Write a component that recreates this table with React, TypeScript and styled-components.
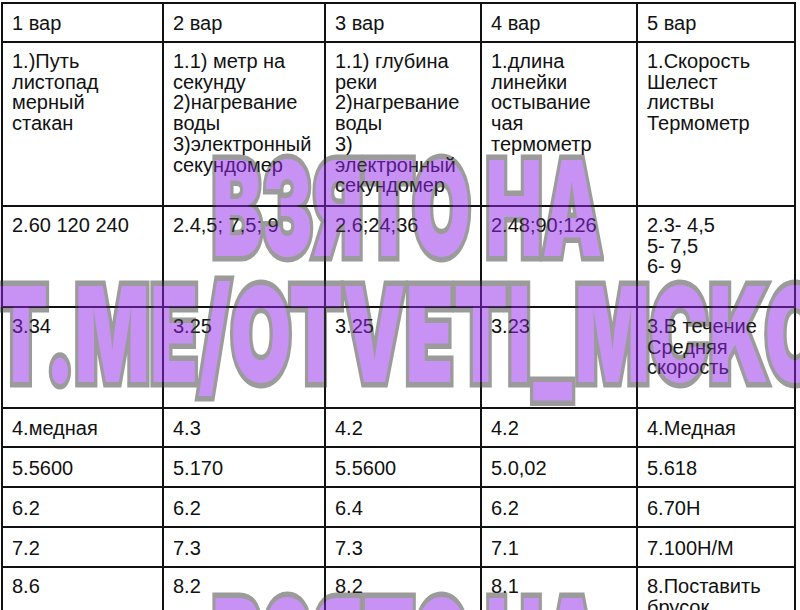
import { useLayoutEffect, useRef, useState } from "react";
import styled, { createGlobalStyle } from "styled-components";

type CellData = string | string[];

interface RowData {
  height: number;
  short?: boolean;
  cells: CellData[];
}

const columns = [161, 162, 156, 156, 158];

const rows: RowData[] = [
  { height: 39, short: true, cells: ["1 вар", "2 вар", "3 вар", "4 вар", "5 вар"] },
  {
    height: 164,
    cells: [
      ["1.)Путь", "листопад", "мерный", "стакан"],
      ["1.1) метр на", "секунду", "2)нагревание", "воды", "3)электронный", "секундомер"],
      ["1.1) глубина", "реки", "2)нагревание", "воды", "3)", "электронный", "секундомер"],
      ["1.длина", "линейки", "остывание", "чая", "термометр"],
      ["1.Скорость", "Шелест", "листвы", "Термометр"],
    ],
  },
  {
    height: 101,
    cells: ["2.60 120 240", "2.4,5; 7,5; 9", "2.6;24;36", "2.48;90;126", ["2.3- 4,5", "5- 7,5", "6- 9"]],
  },
  {
    height: 101,
    cells: ["3.34", "3.25", "3.25", "3.23", ["3.В течение", "Средняя", "скорость"]],
  },
  { height: 39, short: true, cells: ["4.медная", "4.3", "4.2", "4.2", "4.Медная"] },
  { height: 40, short: true, cells: ["5.5600", "5.170", "5.5600", "5.0,02", "5.618"] },
  { height: 40, short: true, cells: ["6.2", "6.2", "6.4", "6.2", "6.70Н"] },
  { height: 40, short: true, cells: ["7.2", "7.3", "7.3", "7.1", "7.100Н/М"] },
  { height: 100, cells: ["8.6", "8.2", "8.2", "8.1", ["8.Поставить", "брусок", "на"]] },
];

// watermark lines: left/top of the box, wanted width of the glyphs
const marks = [
  { text: "ВЗЯТО НА", left: 212, top: 142, width: 390 },
  { text: "T.ME/OTVETI_MCKO", left: -6, top: 268, width: 832 },
  { text: "ВЗЯТО НА", left: 212, top: 580, width: 390 },
];

const MarkText = ({ text, left, top, width }: { text: string; left: number; top: number; width: number }) => {
  const ref = useRef<HTMLDivElement>(null);
  const [scale, setScale] = useState(0.55);

  useLayoutEffect(() => {
    const el = ref.current;
    if (!el) return;
    const measure = () => {
      const w = el.scrollWidth;
      if (w) setScale(width / w);
    };
    measure();
    document.fonts?.ready.then(measure);
  }, [width]);

  return (
    <MarkLine ref={ref} $left={left} $top={top} style={{ transform: `scaleX(${scale})` }}>
      {text}
    </MarkLine>
  );
};

const App = () => {
  return (
    <Page>
      <GlobalStyle />
      <Table>
        {rows.map((row, r) =>
          row.cells.map((cell, c) => (
            <Cell key={`${r}-${c}`} $short={row.short} style={c === 0 ? { height: row.height } : undefined}>
              {(Array.isArray(cell) ? cell : [cell]).map((line, i) => (
                <Line key={i}>{line}</Line>
              ))}
            </Cell>
          ))
        )}
      </Table>

      <Watermark>
        {marks.map((m, i) => (
          <MarkText key={i} {...m} />
        ))}
      </Watermark>
    </Page>
  );
};

export default App;

/* Styled Components */
const GlobalStyle = createGlobalStyle`
  html, body {
    margin: 0;
    padding: 0;
    background: #ffffff;
  }
  body {
    font-family: "Liberation Sans", Arial, sans-serif;
  }
`;

const Page = styled.div`
  position: relative;
  width: 800px;
  height: 610px;
  overflow: hidden;
  background: #ffffff;
`;

const Table = styled.div`
  display: grid;
  grid-template-columns: ${columns.map((w) => `${w}px`).join(" ")};
  grid-auto-rows: auto;
  width: fit-content;
  margin: 2px 0 0 1px;
  border-top: 2px solid #111;
  border-left: 2px solid #111;
`;

const Cell = styled.div<{ $short?: boolean }>`
  box-sizing: border-box;
  display: flex;
  flex-direction: column;
  justify-content: ${({ $short }) => ($short ? "center" : "flex-start")};
  padding: ${({ $short }) => ($short ? "2px 9px 0" : "8px 9px 0")};
  border-right: 2px solid #111;
  border-bottom: 2px solid #111;
  font-size: 20px;
  line-height: 20.7px;
  color: #111;
  white-space: nowrap;
  overflow: hidden;
`;

const Line = styled.div`
  display: block;
`;

const Watermark = styled.div`
  position: absolute;
  inset: 0;
  opacity: 0.5;
  pointer-events: none;
  overflow: hidden;
`;

const MarkLine = styled.div<{ $left: number; $top: number }>`
  position: absolute;
  left: ${({ $left }) => $left}px;
  top: ${({ $top }) => $top}px;
  font-family: Inter, "DejaVu Sans", sans-serif;
  font-weight: 900;
  font-size: 132px;
  line-height: 1;
  white-space: nowrap;
  color: #9327eb;
  -webkit-text-stroke: 11px #3a3a3a;
  paint-order: stroke fill;
  transform-origin: 0 0;
`;
